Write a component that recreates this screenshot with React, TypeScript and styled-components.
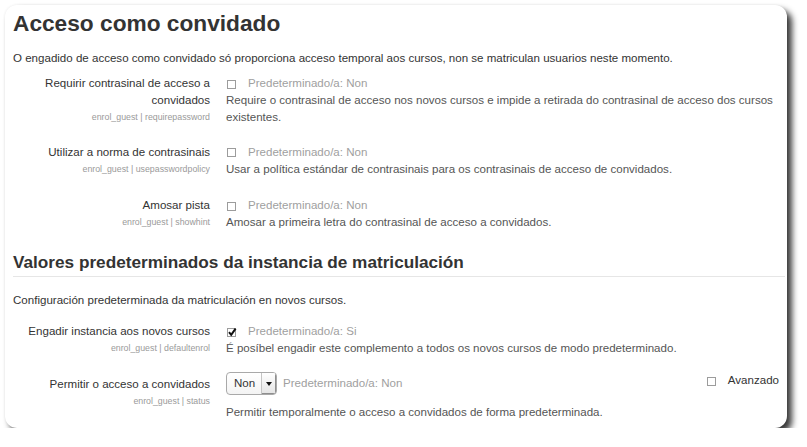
import styled, { createGlobalStyle } from 'styled-components'

const GlobalStyle = createGlobalStyle`
  html, body {
    margin: 0;
    padding: 0;
    background: #ffffff;
  }
  body {
    font-family: "Liberation Sans", Arial, Helvetica, sans-serif;
    color: #333333;
  }
`

const Card = styled.div`
  box-sizing: border-box;
  width: 782px;
  height: 423px;
  margin: 5px 0 0 5px;
  padding: 5px 8px 0 8px;
  background: #ffffff;
  border-radius: 12px;
  box-shadow: 5px 5px 6px rgba(0, 0, 0, 0.78), 0 0 3px rgba(0, 0, 0, 0.07);
  overflow: hidden;
`

const Title = styled.h2`
  margin: 0;
  font-size: 22.7px;
  line-height: 26px;
  font-weight: bold;
  color: #333333;
`

const SectionHeading = styled.h3`
  margin: 20.7px -6px 0 0;
  padding-bottom: 4.3px;
  border-bottom: 1px solid #e6e6e6;
  font-size: 17.2px;
  line-height: 20px;
  font-weight: bold;
  color: #333333;
`

const Intro = styled.p<{ $top: number }>`
  margin: ${p => p.$top}px 0 0 0;
  font-size: 11.55px;
  line-height: 17px;
  color: #333333;
`

const Setting = styled.div<{ $top: number }>`
  display: grid;
  grid-template-columns: 197px 1fr;
  column-gap: 16px;
  margin-top: ${p => p.$top}px;
  font-size: 11.55px;
  line-height: 17px;
`

const LabelCol = styled.div<{ $pad?: number }>`
  text-align: right;
  padding-top: ${p => p.$pad ?? 0}px;
`

const LabelText = styled.div`
  color: #333333;
`

const SettingName = styled.div`
  font-size: 8.8px;
  line-height: 16px;
  color: #9a9a9a;
`

const ValueCol = styled.div`
  display: flex;
  flex-direction: column;
`

const ValueLine = styled.div`
  display: flex;
  align-items: center;
  min-height: 17px;
`

const Box = styled.span`
  box-sizing: border-box;
  display: inline-block;
  width: 9px;
  height: 9px;
  margin: 1px 12px 0 1px;
  border: 1px solid #9c9c9c;
  background: #ffffff;
  position: relative;
  flex: none;
`

const Tick = styled.svg`
  position: absolute;
  left: -1px;
  top: -2px;
`

const DefaultText = styled.span<{ $gap?: number }>`
  color: #a0a0a0;
  margin-left: ${p => p.$gap ?? 0}px;
`

const Description = styled.div<{ $top?: number }>`
  color: #555555;
  margin-top: ${p => p.$top ?? 0}px;
`

const SelectBox = styled.div`
  box-sizing: border-box;
  display: inline-flex;
  width: 51px;
  height: 23px;
  border: 1px solid #a9a9a9;
  border-radius: 4px;
  background: linear-gradient(#ffffff, #f4f4f4);
  overflow: hidden;
  flex: none;
`

const SelectValue = styled.span`
  flex: 1;
  padding-left: 7px;
  line-height: 21px;
  color: #333333;
`

const SelectArrow = styled.span`
  width: 14px;
  display: flex;
  align-items: center;
  justify-content: center;
  border-left: 1px solid #c4c4c4;
  background: linear-gradient(#ffffff, #e4e4e4);
  box-shadow: inset -1px -1px 0 #8e8e8e;

  &::after {
    content: '';
    border-left: 3px solid transparent;
    border-right: 3px solid transparent;
    border-top: 4px solid #111111;
  }
`

const Advanced = styled.label`
  margin-left: auto;
  align-self: flex-start;
  display: flex;
  align-items: center;
  line-height: 17px;
  color: #333333;
`

const Checkbox = ({ checked = false }: { checked?: boolean }) => (
  <Box>
    {checked && (
      <Tick width="10" height="10" viewBox="0 0 10 10">
        <path d="M2 5.2 L4.2 7.8 L8.6 1.6" fill="none" stroke="#111" strokeWidth="2" />
      </Tick>
    )}
  </Box>
)

export default function App() {
  return (
    <>
      <GlobalStyle />
      <Card>
        <Title>Acceso como convidado</Title>
        <Intro $top={14.4}>
          O engadido de acceso como convidado só proporciona acceso temporal aos cursos, non se matriculan usuarios neste momento.
        </Intro>

        <Setting $top={7.7}>
          <LabelCol>
            <LabelText>Requirir contrasinal de acceso a convidados</LabelText>
            <SettingName>enrol_guest | requirepassword</SettingName>
          </LabelCol>
          <ValueCol>
            <ValueLine>
              <Checkbox />
              <DefaultText>Predeterminado/a: Non</DefaultText>
            </ValueLine>
            <Description>
              Require o contrasinal de acceso nos novos cursos e impide a retirada do contrasinal de acceso dos cursos existentes.
            </Description>
          </ValueCol>
        </Setting>

        <Setting $top={17.7}>
          <LabelCol>
            <LabelText>Utilizar a norma de contrasinais</LabelText>
            <SettingName>enrol_guest | usepasswordpolicy</SettingName>
          </LabelCol>
          <ValueCol>
            <ValueLine>
              <Checkbox />
              <DefaultText>Predeterminado/a: Non</DefaultText>
            </ValueLine>
            <Description>Usar a política estándar de contrasinais para os contrasinais de acceso de convidados.</Description>
          </ValueCol>
        </Setting>

        <Setting $top={19.7}>
          <LabelCol>
            <LabelText>Amosar pista</LabelText>
            <SettingName>enrol_guest | showhint</SettingName>
          </LabelCol>
          <ValueCol>
            <ValueLine>
              <Checkbox />
              <DefaultText>Predeterminado/a: Non</DefaultText>
            </ValueLine>
            <Description>Amosar a primeira letra do contrasinal de acceso a convidados.</Description>
          </ValueCol>
        </Setting>

        <SectionHeading>Valores predeterminados da instancia de matriculación</SectionHeading>
        <Intro $top={14.6}>Configuración predeterminada da matriculación en novos cursos.</Intro>

        <Setting $top={14.4}>
          <LabelCol>
            <LabelText>Engadir instancia aos novos cursos</LabelText>
            <SettingName>enrol_guest | defaultenrol</SettingName>
          </LabelCol>
          <ValueCol>
            <ValueLine>
              <Checkbox checked />
              <DefaultText>Predeterminado/a: Si</DefaultText>
            </ValueLine>
            <Description>É posíbel engadir este complemento a todos os novos cursos de modo predeterminado.</Description>
          </ValueCol>
        </Setting>

        <Setting $top={15}>
          <LabelCol $pad={3.3}>
            <LabelText>Permitir o acceso a convidados</LabelText>
            <SettingName>enrol_guest | status</SettingName>
          </LabelCol>
          <ValueCol>
            <ValueLine>
              <SelectBox>
                <SelectValue>Non</SelectValue>
                <SelectArrow />
              </SelectBox>
              <DefaultText $gap={6}>Predeterminado/a: Non</DefaultText>
              <Advanced>
                <Checkbox />
                Avanzado
              </Advanced>
            </ValueLine>
            <Description $top={9}>Permitir temporalmente o acceso a convidados de forma predeterminada.</Description>
          </ValueCol>
        </Setting>
      </Card>
    </>
  )
}
